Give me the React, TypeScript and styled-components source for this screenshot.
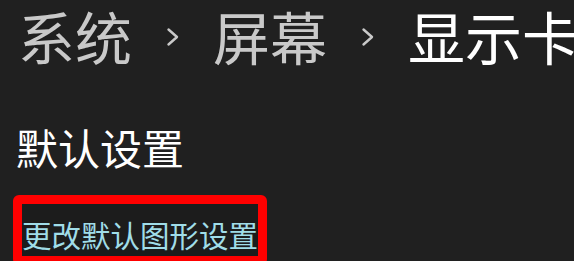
import React from "react";
import styled, { createGlobalStyle } from "styled-components";

const GlobalStyle = createGlobalStyle`
  html, body {
    margin: 0;
    padding: 0;
    background: #202020;
  }
  body {
    font-family: "Noto Sans CJK SC", "Noto Sans", sans-serif;
    overflow: hidden;
  }
`;

const Page = styled.div`
  width: 574px;
  height: 261px;
  overflow: hidden;
  background: #202020;
  padding: 0 0 0 18px;
  box-sizing: border-box;
`;

const Breadcrumb = styled.div`
  display: flex;
  align-items: center;
  white-space: nowrap;
  overflow: hidden;
`;

const Crumb = styled.span<{ $current?: boolean }>`
  flex: none;
  font-size: 57px;
  line-height: 70px;
  color: ${(p) => (p.$current ? "#ffffff" : "#c9c9c9")};
  font-weight: 400;
`;

const Chevron = styled.svg`
  flex: none;
  width: 20px;
  height: 20px;
  margin: 4px 30px 0 31px;
`;

const SectionTitle = styled.h2`
  margin: 52px 0 0 -2px;
  font-size: 42px;
  line-height: 50px;
  font-weight: 400;
  color: #ffffff;
`;

const Highlight = styled.div`
  display: inline-block;
  margin: 23px 0 0 -5px;
  border: 9px solid #ff0000;
  border-radius: 6px;
  background: #1c1c1c;
  padding: 12px 0 4px 0;
`;

const Link = styled.a`
  display: block;
  font-size: 29.5px;
  line-height: 36px;
  color: #a0dde8;
  text-decoration: none;
  cursor: pointer;
`;

const ChevronIcon = () => (
  <Chevron viewBox="0 0 20 20">
    <path
      d="M5.5 2.5 L14 10 L5.5 17.5"
      fill="none"
      stroke="#c9c9c9"
      strokeWidth="2.4"
      strokeLinecap="round"
      strokeLinejoin="round"
    />
  </Chevron>
);

export default function App() {
  return (
    <>
      <GlobalStyle />
      <Page>
        <Breadcrumb>
          <Crumb>系统</Crumb>
          <ChevronIcon />
          <Crumb>屏幕</Crumb>
          <ChevronIcon />
          <Crumb $current>显示卡</Crumb>
        </Breadcrumb>
        <SectionTitle>默认设置</SectionTitle>
        <Highlight>
          <Link>更改默认图形设置</Link>
        </Highlight>
      </Page>
    </>
  );
}
